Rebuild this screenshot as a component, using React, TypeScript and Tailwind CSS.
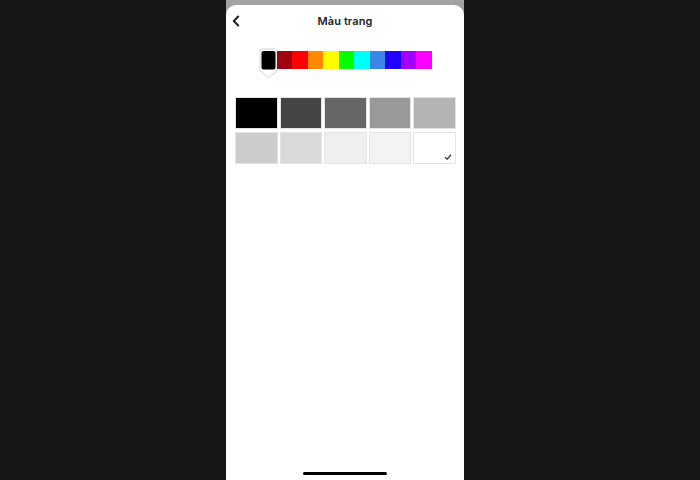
import { ChevronLeft } from "lucide-react";

const spectrum = [
  "#a3000f",
  "#ff0000",
  "#ff8a00",
  "#ffff00",
  "#00ff00",
  "#00ffff",
  "#3d85e6",
  "#2200ff",
  "#a400ff",
  "#ff00ff",
];

const greys = [
  "#000000",
  "#444444",
  "#666666",
  "#999999",
  "#b4b4b4",
  "#cccccc",
  "#d9d9d9",
  "#efefef",
  "#f3f3f3",
  "#ffffff",
];

export default function App() {
  return (
    <div
      className="w-[700px] h-[480px] bg-[#161616] flex justify-center pr-[10px] overflow-hidden"
      style={{ fontFamily: "Inter, 'Noto Sans', sans-serif" }}
    >
      <div className="w-[238px] h-full bg-[#a3a3a3] flex flex-col">
        <div className="mt-[5px] flex-1 bg-white rounded-t-[10px] flex flex-col">
          {/* Header */}
          <div className="h-[32px] relative flex items-center justify-center">
            <ChevronLeft className="absolute left-[1px] top-[7px] w-[18px] h-[18px] text-[#222]" strokeWidth={2.7} />
            <span className="text-[11px] font-semibold text-[#222] tracking-[0.1px]">Màu trang</span>
          </div>

          {/* Hue strip */}
          <div className="mt-[11px] flex justify-center items-start">
            <svg width="19" height="31" viewBox="0 0 19 31" className="-mr-[1px]">
              <path
                d="M3 1 H16 Q18 1 18 3 V23 L9.5 29.5 L1 23 V3 Q1 1 3 1 Z"
                fill="#ffffff"
                stroke="#d6d6d6"
                strokeWidth="1"
              />
              <rect x="2.5" y="3" width="14" height="18.5" rx="2" fill="#000000" />
            </svg>
            <div className="mt-[3px] flex">
              {spectrum.map((c) => (
                <div key={c} className="w-[15.5px] h-[18px]" style={{ backgroundColor: c }} />
              ))}
            </div>
          </div>

          {/* Grey swatches */}
          <div className="mt-[18px] pl-[9px] pr-[8px] grid grid-cols-5 gap-x-[2px] gap-y-[3px]">
            {greys.map((c, i) => (
              <div
                key={c}
                className="relative h-[32px] border border-[#e4e4e4]"
                style={{ backgroundColor: c }}
              >
                {i === greys.length - 1 && (
                  <svg
                    viewBox="0 0 10 8"
                    className="absolute right-[3px] bottom-[3px] w-[8px] h-[6px]"
                  >
                    <path d="M1 4.2 L3.8 7 L9 1" fill="none" stroke="#333" strokeWidth="1.6" />
                  </svg>
                )}
              </div>
            ))}
          </div>

          <div className="flex-1" />
          <div className="mb-[5px] mx-auto w-[84px] h-[3px] rounded-full bg-black" />
        </div>
      </div>
    </div>
  );
}
